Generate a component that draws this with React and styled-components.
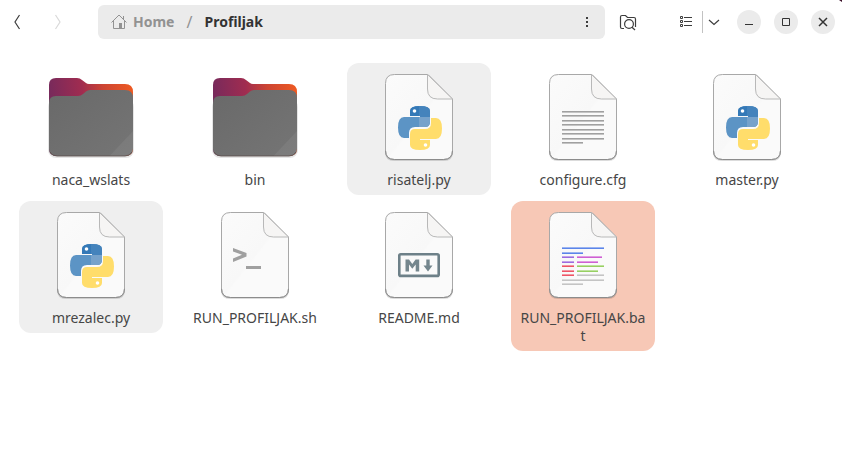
import React from "react";
import styled, { createGlobalStyle } from "styled-components";

const GlobalStyle = createGlobalStyle`
  * { box-sizing: border-box; }
  body {
    margin: 0;
    background: #ffffff;
    color: #3d3d3d;
    font-family: "Noto Sans", "Open Sans", sans-serif;
    font-size: 14px;
    line-height: 18px;
  }
  button {
    border: 0;
    padding: 0;
    margin: 0;
    background: none;
    color: inherit;
    font: inherit;
  }
  svg { display: block; }
`;

const Window = styled.div`
  min-height: 100vh;
  background: #ffffff;
`;

const ScreenCorner = styled.span`
  position: absolute;
  top: 0;
  right: 0;
  width: 3px;
  height: 2px;
  background: #3b0f28;
  clip-path: polygon(0 0, 100% 0, 100% 100%);
`;

const HeaderBar = styled.header`
  display: flex;
  align-items: center;
  height: 44px;
  padding-right: 7px;
`;

const NavGroup = styled.nav`
  display: flex;
  gap: 7px;
  margin-right: 23px;
`;

const IconButton = styled.button`
  display: flex;
  align-items: center;
  justify-content: center;
  width: ${(p) => p.$width || 34}px;
  height: 34px;
  color: #3d3d3d;
  &:disabled { color: #d9d9d9; }
`;

const PathBar = styled.div`
  flex: 1;
  display: flex;
  align-items: center;
  height: 34px;
  padding-left: 13px;
  border-radius: 6px;
  background: #ebebeb;
  font-weight: 700;
`;

const PathPart = styled.button`
  display: flex;
  align-items: center;
  gap: 6px;
  color: ${(p) => (p.$current ? "#333333" : "#929292")};
`;

const Slash = styled.span`
  width: 30px;
  text-align: center;
  font-size: 16px;
  font-weight: 400;
  color: #929292;
`;

const PathMenu = styled(IconButton)`
  margin-left: auto;
`;

const Tools = styled.div`
  display: flex;
  align-items: center;
  margin-left: 6px;
`;

const SplitButton = styled.div`
  display: flex;
  align-items: center;
  margin-left: 24px;
`;

const Divider = styled.span`
  width: 1px;
  height: 22px;
  background: #c2c2c2;
`;

const WindowControls = styled.div`
  display: flex;
  gap: 13px;
  margin-left: 12px;
`;

const WindowButton = styled.button`
  display: flex;
  align-items: center;
  justify-content: center;
  width: 24px;
  height: 24px;
  border-radius: 50%;
  background: #ebebeb;
  color: #333333;
`;

const FileGrid = styled.ul`
  display: grid;
  grid-template-columns: repeat(auto-fill, 144px);
  align-items: start;
  gap: 6px 20px;
  margin: 0;
  padding: 19px;
  list-style: none;
`;

const tileColors = { plain: "transparent", hover: "#efefef", selected: "#f7c8b6" };

const Tile = styled.button`
  display: flex;
  flex-direction: column;
  align-items: center;
  gap: 6px;
  width: 100%;
  padding: 6px;
  border-radius: 12px;
  background: ${(p) => tileColors[p.$tone]};
  color: #464646;
`;

const FileName = styled.span`
  width: 100%;
  padding: 0 2px;
  text-align: center;
  word-break: break-all;
`;

function Line({ size = 16, children, ...rest }) {
  return (
    <svg width={size} height={size} viewBox={`0 0 ${size} ${size}`} fill="none" stroke="currentColor" strokeWidth="1.2" aria-hidden="true" {...rest}>
      {children}
    </svg>
  );
}

function FolderIcon({ id }) {
  return (
    <svg width="96" height="96" viewBox="0 0 96 96" aria-hidden="true">
      <defs>
        <linearGradient id={`${id}-back`} x1="6" y1="30" x2="90" y2="20" gradientUnits="userSpaceOnUse">
          <stop offset="0" stopColor="#762a5c" />
          <stop offset="0.4" stopColor="#a02c50" />
          <stop offset="0.65" stopColor="#cc4433" />
          <stop offset="1" stopColor="#ee5a22" />
        </linearGradient>
        <linearGradient id={`${id}-front`} x1="0" y1="0" x2="1" y2="1">
          <stop offset="0" stopColor="#696969" />
          <stop offset="1" stopColor="#757575" />
        </linearGradient>
      </defs>
      <rect x="5" y="30" width="86" height="59" rx="8" fill="#000000" opacity="0.1" />
      <path d="M6 16Q6 9 13 9H34Q37 9 39 11L43 14Q44 15 46 15H82Q90 15 90 23V80Q90 87 82 87H14Q6 87 6 80Z" fill={`url(#${id}-back)`} />
      <path d="M6 34Q6 27 13 27H35Q38 27 40 25L43 22.500Q44.500 21 47 21H82Q90 21 90 29V79.500Q90 87 82 87H14Q6 87 6 79.500Z" fill={`url(#${id}-front)`} />
      <path d="M66.500 87L90 62V79.500Q90 87 82 87Z" fill="#ffffff" opacity="0.06" />
      <path d="M7 83Q9 87 14 87H82Q87 87 89 83" fill="none" stroke="#5c4c4a" strokeWidth="0.8" />
    </svg>
  );
}

function Paper({ id, children }) {
  return (
    <svg width="96" height="96" viewBox="0 0 96 96" aria-hidden="true">
      <defs>
        <linearGradient id={`${id}-sheet`} x1="0" y1="0" x2="1" y2="1">
          <stop offset="0" stopColor="#fbfbfb" />
          <stop offset="0.5" stopColor="#f8f8f8" />
          <stop offset="0.52" stopColor="#fafafa" />
          <stop offset="1" stopColor="#fafafa" />
        </linearGradient>
      </defs>
      <path d="M14 15V83Q14 92 23 92H73Q82 92 82 83V30Z" fill="#000000" opacity="0.14" />
      <path d="M14.500 14.500Q14.500 5.500 23.500 5.500H57L81.500 30V81.500Q81.500 90.500 72.500 90.500H23.500Q14.500 90.500 14.500 81.500Z" fill={`url(#${id}-sheet)`} stroke="#a8a8a8" />
      <path d="M56.500 5.500V20Q56.500 30 66.500 30H81.500Z" fill="#f6f5f4" stroke="#b8b8b8" />
      <path d="M14.500 81.500Q14.500 90.500 23.500 90.500H72.500Q81.500 90.500 81.500 81.500" fill="none" stroke="#8c8c8c" />
      {children}
    </svg>
  );
}

const SNAKE = "M39 47V42Q39 37 49 37Q59 37 59 42V53Q59 58 54 58H44Q38 58 38 64V69H33Q27 69 27 58.500Q27 48 33 48H49V47Z";

function PythonMark({ id }) {
  return (
    <>
      <clipPath id={`${id}-snake`}><path d={SNAKE} /></clipPath>
      <g clipPath={`url(#${id}-snake)`}>
        <rect x="27" y="37" width="32" height="32" fill="#5c94c5" />
        <rect x="27" y="37" width="21" height="11" fill="#3479b7" />
        <rect x="48" y="37" width="11" height="11" fill="#4483bc" />
        <rect x="48" y="48" width="11" height="10" fill="#76a2cb" />
      </g>
      <path d={SNAKE} fill="#ffdd6b" transform="rotate(180 49 59)" />
      <circle cx="43.500" cy="42" r="1.800" fill="#ffffff" />
      <circle cx="54.500" cy="76" r="1.800" fill="#ffffff" />
    </>
  );
}

function TextMark() {
  return [42, 46, 51, 55, 60, 64, 69, 73].map((y, i) => (
    <g key={y}>
      <rect x="27" y={y} width={i === 7 ? 21 : 42} height="1" fill="#a0a0a0" />
      <rect x="27" y={y + 1} width={i === 7 ? 21 : 42} height="1" fill="#c4c4c4" />
    </g>
  ));
}

function ShellMark() {
  return (
    <g fill="#a0a0a0">
      <path d="M26 41L39.500 46V49.500L26 55V51.500L35 47.800L26 44.500Z" />
      <rect x="39" y="59" width="15" height="3" />
    </g>
  );
}

function MarkdownMark() {
  return (
    <g fill="#74868d">
      <rect x="28.300" y="47.300" width="39.400" height="21.600" rx="1.500" fill="none" stroke="#6d8088" strokeWidth="2.600" />
      <path d="M34.500 64.500V52.500H38L41.300 57L44.600 52.500H48.200V64.500H44.700V57.500L41.300 61.800L38 57.500V64.500Z" />
      <path d="M55.300 52.500H58.700V58.500H61.500L57 64.500L52.500 58.500H55.300Z" />
    </g>
  );
}

const scriptLines = [
  [27, 40, 42, "#5b85ea"],
  [27, 45, 21, "#5b85ea"],
  [27, 49, 12, "#9d6be0"], [42, 49, 25, "#cf5fd3"],
  [27, 54, 12, "#9d6be0"], [42, 54, 21, "#cf5fd3"],
  [27, 58, 12, "#ee5566"], [42, 58, 27, "#97d062"],
  [27, 63, 12, "#ee5566"], [42, 63, 21, "#97d062"],
  [27, 67, 12, "#ee5566"], [42, 67, 27, "#c4c4c4"],
  [27, 72, 42, "#c4c4c4"],
  [27, 76, 21, "#c4c4c4"],
];

function ScriptMark() {
  return scriptLines.map(([x, y, w, color]) => (
    <g key={`${x}-${y}`} fill={color}>
      <rect x={x} y={y} width={w} height="1" opacity="0.6" />
      <rect x={x} y={y + 1} width={w} height="1" />
    </g>
  ));
}

const marks = { python: PythonMark, text: TextMark, shell: ShellMark, markdown: MarkdownMark, script: ScriptMark };

function FileIcon({ kind, id }) {
  if (kind === "folder") return <FolderIcon id={id} />;
  const Mark = marks[kind];
  return <Paper id={id}><Mark id={id} /></Paper>;
}

const files = [
  { name: "naca_wslats", kind: "folder" },
  { name: "bin", kind: "folder" },
  { name: "risatelj.py", kind: "python", tone: "hover" },
  { name: "configure.cfg", kind: "text" },
  { name: "master.py", kind: "python" },
  { name: "mrezalec.py", kind: "python", tone: "hover" },
  { name: "RUN_PROFILJAK.sh", kind: "shell" },
  { name: "README.md", kind: "markdown" },
  { name: "RUN_PROFILJAK.bat", kind: "script", tone: "selected" },
];

export default function App() {
  return (
    <Window>
      <GlobalStyle />
      <HeaderBar>
        <NavGroup aria-label="History">
          <IconButton aria-label="Back"><Line><path d="M10.500 1L6 8L10.500 15" /></Line></IconButton>
          <IconButton aria-label="Forward" disabled><Line><path d="M5.500 1L10 8L5.500 15" /></Line></IconButton>
        </NavGroup>
        <PathBar>
          <PathPart>
            <Line>
              <path d="M0.500 8.500L8 1L15.500 8.500M2.500 7V14.500H13.500V7M12.500 5V2" strokeWidth="1" />
              <path d="M8 9H11V14.500H8Z" fill="currentColor" stroke="none" />
            </Line>
            Home
          </PathPart>
          <Slash>/</Slash>
          <PathPart $current aria-current="page">Profiljak</PathPart>
          <PathMenu $width={36} aria-label="Folder menu">
            <Line><path d="M7 3h2v2h-2zM7 7h2v2h-2zM7 11h2v2h-2z" fill="currentColor" stroke="none" /></Line>
          </PathMenu>
        </PathBar>
        <Tools>
          <IconButton aria-label="Search">
            <Line size={18}>
              <path d="M5 15.500H3Q1.500 15.500 1.500 14V4Q1.500 2.500 3 2.500H6.500L8.500 4.500H15Q16.500 4.500 16.500 6V14" />
              <circle cx="10" cy="11" r="4.400" />
              <path d="M13 14.200L16 17" />
            </Line>
          </IconButton>
          <SplitButton>
            <IconButton $width={33} aria-label="List view">
              <Line>
                <path d="M2.500 2.500h2v2h-2zM2.500 6.500h2v2h-2zM2.500 10.500h2v2h-2z" strokeWidth="1" />
                <path d="M6 3.500H14M6 7.500H14M6 11.500H14" strokeWidth="1" />
              </Line>
            </IconButton>
            <Divider />
            <IconButton $width={22} aria-label="View options"><Line><path d="M3 6L8 10.500L13 6" /></Line></IconButton>
          </SplitButton>
          <WindowControls>
            <WindowButton aria-label="Minimize"><Line><path d="M4 10.500H12" strokeWidth="1" /></Line></WindowButton>
            <WindowButton aria-label="Maximize"><Line><path d="M4.500 4.500H11.500V11.500H4.500Z" strokeWidth="1" /></Line></WindowButton>
            <WindowButton aria-label="Close"><Line><path d="M4 4L12 12M12 4L4 12" strokeWidth="1.500" /></Line></WindowButton>
          </WindowControls>
        </Tools>
      </HeaderBar>
      <ScreenCorner />
      <main>
        <FileGrid>
          {files.map((file, i) => (
            <li key={file.name}>
              <Tile $tone={file.tone || "plain"}>
                <FileIcon kind={file.kind} id={`file-${i}`} />
                <FileName>{file.name}</FileName>
              </Tile>
            </li>
          ))}
        </FileGrid>
      </main>
    </Window>
  );
}
